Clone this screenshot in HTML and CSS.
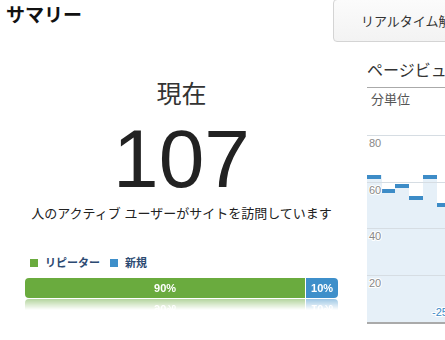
FILE: index.html
```html
<!DOCTYPE html>
<html lang="ja">
<head>
  <meta charset="UTF-8">
  <meta name="viewport" content="width=device-width, initial-scale=1.0">
  <title>サマリー</title>
  <link rel="stylesheet" href="styles.css">
</head>
<body>
  <div class="page">
    <header class="top">
      <h1 class="title">サマリー</h1>
      <button type="button" class="rt-btn">リアルタイム解析</button>
    </header>

    <main class="main">
      <section class="now">
        <div class="now-label">現在</div>
        <div class="now-count">107</div>
        <p class="now-desc">人のアクティブ ユーザーがサイトを訪問しています</p>

        <ul class="legend">
          <li><span class="swatch swatch-return"></span>リピーター</li>
          <li><span class="swatch swatch-new"></span>新規</li>
        </ul>

        <div class="split-bar">
          <div class="seg seg-return" style="width: 89.5%">90%</div>
          <div class="seg seg-new">10%</div>
        </div>
      </section>

      <section class="pv">
        <h2 class="pv-title">ページビュー</h2>
        <div class="pv-sub">分単位</div>
        <svg class="pv-chart" width="78" height="214" viewBox="0 0 78 214">
          <!-- bars -->
          <g class="bar-fill">
            <rect x="0" y="65" width="15" height="147"/>
            <rect x="15" y="79" width="13" height="133"/>
            <rect x="28" y="74" width="14" height="138"/>
            <rect x="42" y="86" width="14" height="126"/>
            <rect x="56" y="65" width="14" height="147"/>
            <rect x="70" y="93" width="14" height="119"/>
          </g>
          <!-- grid -->
          <g class="grid">
            <rect x="0" y="25" width="78" height="1"/>
            <rect x="0" y="72" width="78" height="1"/>
            <rect x="0" y="118" width="78" height="1"/>
            <rect x="0" y="165" width="78" height="1"/>
          </g>
          <g class="bar-cap">
            <rect x="0" y="65" width="14" height="4"/>
            <rect x="15" y="79" width="13" height="4"/>
            <rect x="28" y="74" width="14" height="4"/>
            <rect x="42" y="86" width="14" height="4"/>
            <rect x="56" y="65" width="14" height="4"/>
            <rect x="70" y="93" width="14" height="4"/>
          </g>
          <g class="y-labels">
            <text x="2" y="37">80</text>
            <text x="2" y="84">60</text>
            <text x="2" y="130">40</text>
            <text x="2" y="177">20</text>
          </g>
          <text class="x-label" x="65" y="206">-25</text>
          <rect class="axis" x="0" y="212" width="78" height="2"/>
        </svg>
      </section>
    </main>
  </div>
</body>
</html>
```

FILE: styles.css
```css
body {
  margin: 0;
  font-family: "Liberation Sans", "Noto Sans CJK JP", sans-serif;
  color: #222;
  background: #fff;
}

.page {
  width: 445px;
  height: 340px;
  overflow: hidden;
}

/* header */
.top {
  display: grid;
  grid-template-columns: 333px 160px;
  height: 56px;
}

.title {
  margin: 0;
  padding: 4px 0 0 6px;
  font-size: 19px;
  line-height: 24px;
  font-weight: bold;
  color: #111;
}

.rt-btn {
  height: 43px;
  margin-top: -1px;
  padding: 0 0 0 27px;
  text-align: left;
  font-family: inherit;
  font-size: 13px;
  color: #333;
  background: linear-gradient(#fbfbfb, #f3f3f3);
  border: 1px solid #d4d4d4;
  border-radius: 4px;
  white-space: nowrap;
}

/* columns */
.main {
  display: grid;
  grid-template-columns: 363px 78px;
  column-gap: 4px;
}

.now {
  padding: 23px 25px 0;
  text-align: center;
}

.now-label {
  font-size: 25px;
  line-height: 30px;
  color: #333;
}

.now-count {
  margin-top: 8px;
  font-size: 82px;
  line-height: 84px;
  color: #222;
}

.now-desc {
  margin: 4px 0 0;
  font-size: 13px;
  line-height: 18px;
  color: #222;
}

.legend {
  display: flex;
  gap: 10px;
  margin: 33px 0 0;
  padding: 0 0 0 5px;
  list-style: none;
  font-size: 11px;
  line-height: 14px;
  font-weight: bold;
  color: #2c4a72;
}

.legend li {
  display: flex;
  align-items: center;
}

.swatch {
  width: 8px;
  height: 8px;
  margin-right: 7px;
}

.swatch-return { background: #6aab3e; }
.swatch-new { background: #3e8fca; }

.split-bar {
  display: flex;
  height: 20px;
  margin-top: 8px;
  border-radius: 4px;
  overflow: hidden;
  -webkit-box-reflect: below 1px linear-gradient(transparent 45%, rgba(255, 255, 255, 0.5));
}

.seg {
  font-size: 11px;
  line-height: 20px;
  font-weight: bold;
  color: #fff;
  text-align: center;
}

.seg-return {
  background: #6aab3e;
  border-right: 1px solid #fff;
}

.seg-new {
  flex: 1;
  background: #3e8fca;
}

/* page views */
.pv {
  padding-top: 4px;
  overflow: hidden;
}

.pv-title {
  margin: 0;
  padding-bottom: 5px;
  font-size: 16px;
  line-height: 22px;
  font-weight: normal;
  color: #333;
  white-space: nowrap;
  border-bottom: 1px solid #aaa;
}

.pv-sub {
  padding: 3px 0 0 4px;
  font-size: 13px;
  line-height: 18px;
  color: #555;
}

.pv-chart {
  display: block;
  margin-top: 1px;
  overflow: hidden;
}

.bar-fill rect { fill: #e6f0f8; }
.grid rect { fill: #d6dde3; }
.bar-cap rect { fill: #3d8cc7; }
.axis { fill: #aaa; }

.y-labels text,
.x-label {
  font-family: "Liberation Sans", sans-serif;
  font-size: 11px;
  stroke: #fff;
  stroke-width: 2px;
  paint-order: stroke;
}

.y-labels text { fill: #888; }
.x-label { fill: #3d8cc7; }
```
